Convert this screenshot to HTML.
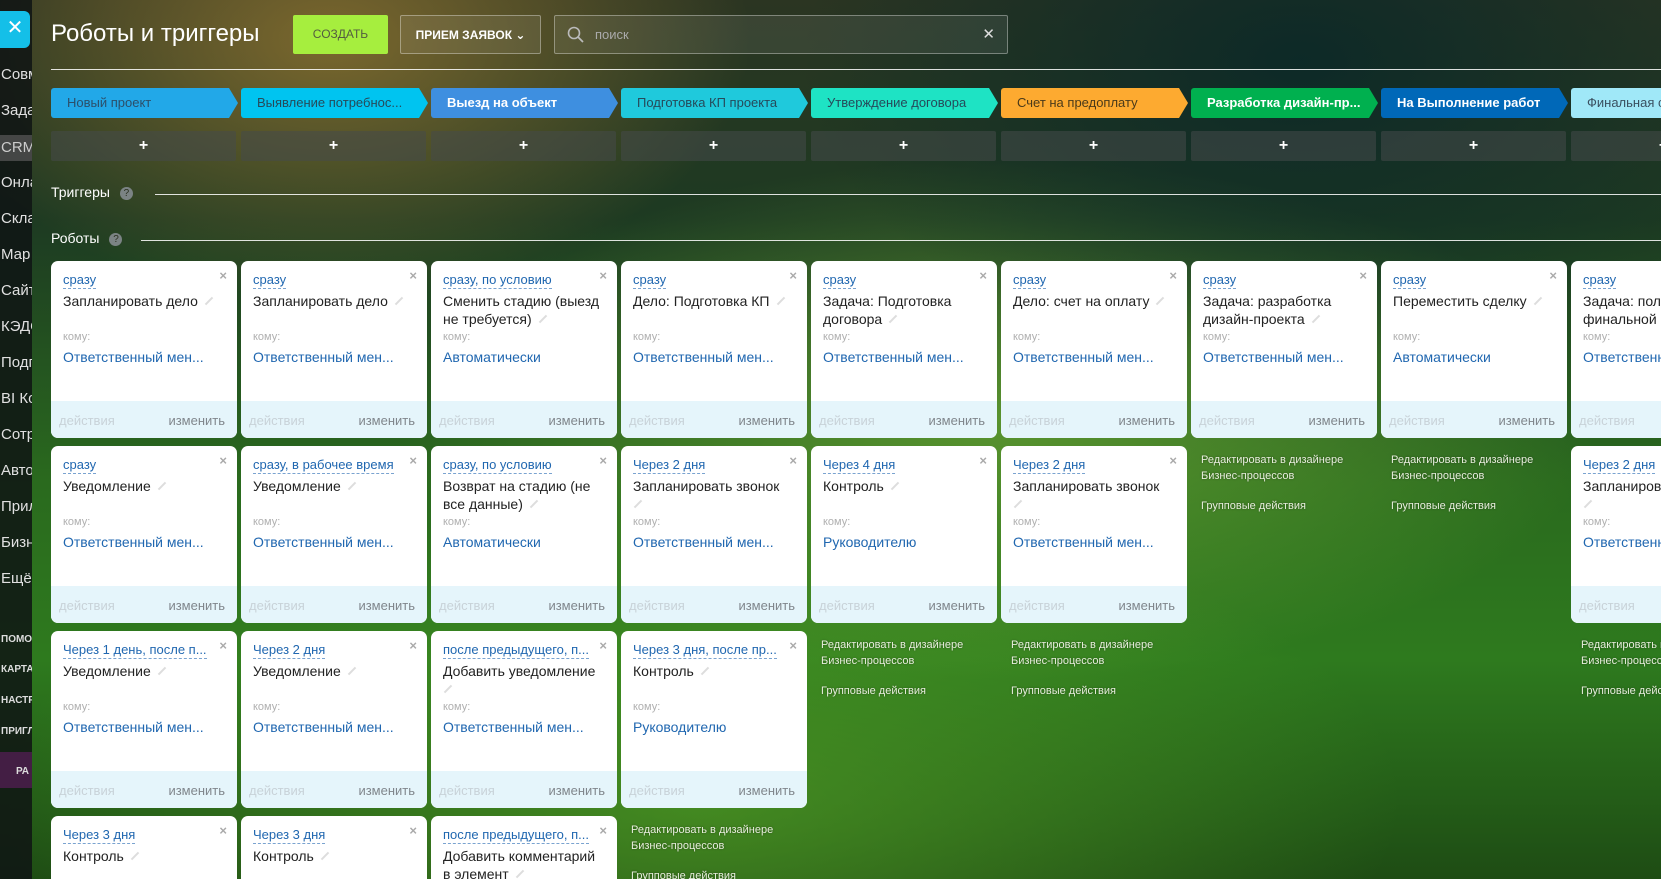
<!DOCTYPE html>
<html><head><meta charset="utf-8"><style>
*{box-sizing:border-box;margin:0;padding:0}
html,body{width:1661px;height:879px;overflow:hidden}
#w{position:relative;width:1661px;height:879px;overflow:hidden;font-family:"Liberation Sans","DejaVu Sans",sans-serif;
background:
radial-gradient(ellipse 420px 260px at 330px 40px,rgba(150,120,50,.75),rgba(150,120,50,0) 100%),
radial-gradient(ellipse 500px 300px at 1300px 60px,rgba(10,40,40,.9),rgba(10,40,40,0) 100%),
radial-gradient(ellipse 600px 260px at 1000px 420px,rgba(130,190,60,.55),rgba(130,190,60,0) 100%),
radial-gradient(ellipse 700px 300px at 700px 800px,rgba(90,170,40,.6),rgba(90,170,40,0) 100%),
linear-gradient(180deg,#2b3522 0%,#1d3a22 25%,#2a6a1e 55%,#2e7a1e 75%,#1e4c14 100%);}
.side{position:absolute;left:0;top:0;width:32px;height:879px;background:rgba(15,20,20,.85);overflow:hidden}
.side div{position:absolute;left:1px;color:#e0e0e0;font-size:15px;white-space:nowrap}
.side .sm{font-size:10px;font-weight:bold;color:#ddd}
.close{position:absolute;left:0;top:11px;width:30px;height:37px;background:#14bfe8;border-radius:0 6px 6px 0;color:#fff;font-size:20px;text-align:center;line-height:35px}
.title{position:absolute;left:51px;top:20px;color:#fff;font-size:24px}
.btn{position:absolute;top:15px;height:39px;border-radius:2px;font-size:12px;font-weight:bold;text-align:center;line-height:39px}
.hline{position:absolute;height:1px;background:rgba(255,255,255,.85);right:0}
.stage{position:absolute;top:88px;height:30px;width:187px;font-size:13px;line-height:30px;padding-left:16px;white-space:nowrap;overflow:hidden;border-radius:3px 0 0 3px;clip-path:polygon(0 0,178px 0,187px 50%,178px 100%,0 100%)}
.plus{position:absolute;top:131px;height:30px;width:185px;background:rgba(70,75,75,.55);border-radius:2px;color:#fff;text-align:center;line-height:30px;font-size:16px;font-weight:bold}
.sec{position:absolute;left:51px;color:#fff;font-size:14px}
.q{display:inline-block;width:13px;height:13px;border-radius:50%;background:#7b8384;color:#2a3020;font-size:10px;text-align:center;line-height:13px;margin-left:10px;vertical-align:1px}
.card{position:absolute;width:186px;height:177px;background:#fff;border-radius:7px;overflow:hidden}
.card .x{position:absolute;right:10px;top:7px;color:#aaa;font-size:13px;font-weight:bold}
.card .t{position:absolute;left:12px;top:11px;color:#2067b0;font-size:13px;border-bottom:1px dashed #7aa3d0;white-space:nowrap;line-height:16px;max-width:155px;overflow:hidden}
.card .n{position:absolute;left:12px;top:31px;width:160px;color:#222;font-size:14px;line-height:18px}
.card .n i{display:inline-block;width:10px;height:2px;background:#ddd;transform:rotate(-45deg);margin-left:6px;vertical-align:4px}
.card .k{position:absolute;left:12px;top:70px;color:#b0b0b0;font-size:11px}
.card .l{position:absolute;left:12px;top:88px;color:#2067b0;font-size:14px;white-space:nowrap}
.card .f{position:absolute;left:0;right:0;bottom:0;height:37px;background:#e5f5fb}
.card .f span{position:absolute;top:12px;font-size:13px}
.card .f .a{left:8px;color:#c8d2d8}
.card .f .c{right:12px;color:#80868c}
.links{position:absolute;color:#e8eedd;font-size:11px;line-height:16px;width:185px}
.links div{margin-bottom:14px;text-shadow:0 0 2px rgba(0,0,0,.4)}
</style></head><body><div id="w">
<div class="side">
<div style="top:66px">Совм</div><div style="top:102px">Зада</div>
<div style="top:135px;left:0;width:32px;height:26px;background:rgba(90,90,90,.7);color:#ccc;padding-left:1px;line-height:26px">CRM</div>
<div style="top:174px">Онла</div><div style="top:210px">Скла</div><div style="top:246px">Мар</div><div style="top:282px">Сайт</div><div style="top:318px">КЭДС</div><div style="top:354px">Подп</div><div style="top:390px">BI Ко</div><div style="top:426px">Сотр</div><div style="top:462px">Авто</div><div style="top:498px">Прил</div><div style="top:534px">Бизн</div><div style="top:570px">Ещё</div>
<div class="sm" style="top:634px">ПОМО</div><div class="sm" style="top:664px">КАРТА</div><div class="sm" style="top:695px">НАСТР</div><div class="sm" style="top:726px">ПРИГЛ</div>
<div style="top:752px;left:0;width:32px;height:36px;background:rgba(80,30,80,.8)"></div>
<div class="sm" style="top:766px;left:16px">РА</div>
</div>
<div class="close">✕</div>
<div class="title">Роботы и триггеры</div>
<div class="btn" style="left:293px;width:95px;background:#a6ee3e;color:#545c40;font-weight:normal">СОЗДАТЬ</div>
<div class="btn" style="left:400px;width:141px;border:1px solid rgba(255,255,255,.35);background:rgba(255,255,255,.08);color:#fff">ПРИЕМ ЗАЯВОК ⌄</div>
<div style="position:absolute;left:554px;top:15px;width:454px;height:39px;border:1px solid rgba(255,255,255,.35);background:rgba(255,255,255,.08);border-radius:2px">
<svg style="position:absolute;left:12px;top:10px" width="18" height="18" viewBox="0 0 18 18"><circle cx="7" cy="7" r="5.5" fill="none" stroke="#bbb" stroke-width="1.6"/><line x1="11" y1="11" x2="16" y2="16" stroke="#bbb" stroke-width="1.8"/></svg>
<span style="position:absolute;left:40px;top:11px;color:#aaa;font-size:13px">поиск</span>
<span style="position:absolute;right:12px;top:9px;color:#ddd;font-size:15px">✕</span></div>
<div class="hline" style="left:51px;top:69px"></div>

<div class="stage" style="left:51px;background:#22a8e8;color:#2c4f6a">Новый проект</div>
<div class="stage" style="left:241px;background:#00c4f0;color:#264a5a">Выявление потребнос...</div>
<div class="stage" style="left:431px;background:#3e8fe0;color:#fff;font-weight:bold">Выезд на объект</div>
<div class="stage" style="left:621px;background:#1fc9dc;color:#264a5a">Подготовка КП проекта</div>
<div class="stage" style="left:811px;background:#1ee3c4;color:#264a5a">Утверждение договора</div>
<div class="stage" style="left:1001px;background:#fdaa30;color:#4a3a1a">Счет на предоплату</div>
<div class="stage" style="left:1191px;background:#00b04f;color:#fff;font-weight:bold">Разработка дизайн-пр...</div>
<div class="stage" style="left:1381px;background:#0068b8;color:#fff;font-weight:bold">На Выполнение работ</div>
<div class="stage" style="left:1571px;background:#a0e8f8;color:#3a5060">Финальная с</div>

<div class="plus" style="left:51px">+</div><div class="plus" style="left:241px">+</div><div class="plus" style="left:431px">+</div><div class="plus" style="left:621px">+</div><div class="plus" style="left:811px">+</div><div class="plus" style="left:1001px">+</div><div class="plus" style="left:1191px">+</div><div class="plus" style="left:1381px">+</div><div class="plus" style="left:1571px">+</div>

<div class="sec" style="top:184px">Триггеры<span class="q">?</span></div>
<div class="hline" style="left:155px;top:194px"></div>
<div class="sec" style="top:230px">Роботы<span class="q">?</span></div>
<div class="hline" style="left:141px;top:240px"></div>

<div class="card" style="left:51px;top:261px"><span class="x">×</span><span class="t">сразу</span><div class="n">Запланировать дело<i></i></div><div class="k">кому:</div><div class="l">Ответственный мен...</div><div class="f"><span class="a">действия</span><span class="c">изменить</span></div></div>
<div class="card" style="left:51px;top:446px"><span class="x">×</span><span class="t">сразу</span><div class="n">Уведомление<i></i></div><div class="k">кому:</div><div class="l">Ответственный мен...</div><div class="f"><span class="a">действия</span><span class="c">изменить</span></div></div>
<div class="card" style="left:51px;top:631px"><span class="x">×</span><span class="t">Через 1 день, после п...</span><div class="n">Уведомление<i></i></div><div class="k">кому:</div><div class="l">Ответственный мен...</div><div class="f"><span class="a">действия</span><span class="c">изменить</span></div></div>
<div class="card" style="left:51px;top:816px"><span class="x">×</span><span class="t">Через 3 дня</span><div class="n">Контроль<i></i></div></div>

<div class="card" style="left:241px;top:261px"><span class="x">×</span><span class="t">сразу</span><div class="n">Запланировать дело<i></i></div><div class="k">кому:</div><div class="l">Ответственный мен...</div><div class="f"><span class="a">действия</span><span class="c">изменить</span></div></div>
<div class="card" style="left:241px;top:446px"><span class="x">×</span><span class="t">сразу, в рабочее время</span><div class="n">Уведомление<i></i></div><div class="k">кому:</div><div class="l">Ответственный мен...</div><div class="f"><span class="a">действия</span><span class="c">изменить</span></div></div>
<div class="card" style="left:241px;top:631px"><span class="x">×</span><span class="t">Через 2 дня</span><div class="n">Уведомление<i></i></div><div class="k">кому:</div><div class="l">Ответственный мен...</div><div class="f"><span class="a">действия</span><span class="c">изменить</span></div></div>
<div class="card" style="left:241px;top:816px"><span class="x">×</span><span class="t">Через 3 дня</span><div class="n">Контроль<i></i></div></div>

<div class="card" style="left:431px;top:261px"><span class="x">×</span><span class="t">сразу, по условию</span><div class="n">Сменить стадию (выезд не требуется)<i></i></div><div class="k">кому:</div><div class="l">Автоматически</div><div class="f"><span class="a">действия</span><span class="c">изменить</span></div></div>
<div class="card" style="left:431px;top:446px"><span class="x">×</span><span class="t">сразу, по условию</span><div class="n">Возврат на стадию (не все данные)<i></i></div><div class="k">кому:</div><div class="l">Автоматически</div><div class="f"><span class="a">действия</span><span class="c">изменить</span></div></div>
<div class="card" style="left:431px;top:631px"><span class="x">×</span><span class="t">после предыдущего, п...</span><div class="n">Добавить уведомление<br><i style="margin-left:0"></i></div><div class="k">кому:</div><div class="l">Ответственный мен...</div><div class="f"><span class="a">действия</span><span class="c">изменить</span></div></div>
<div class="card" style="left:431px;top:816px"><span class="x">×</span><span class="t">после предыдущего, п...</span><div class="n">Добавить комментарий в элемент<i></i></div></div>

<div class="card" style="left:621px;top:261px"><span class="x">×</span><span class="t">сразу</span><div class="n">Дело: Подготовка КП<i></i></div><div class="k">кому:</div><div class="l">Ответственный мен...</div><div class="f"><span class="a">действия</span><span class="c">изменить</span></div></div>
<div class="card" style="left:621px;top:446px"><span class="x">×</span><span class="t">Через 2 дня</span><div class="n">Запланировать звонок<br><i style="margin-left:0"></i></div><div class="k">кому:</div><div class="l">Ответственный мен...</div><div class="f"><span class="a">действия</span><span class="c">изменить</span></div></div>
<div class="card" style="left:621px;top:631px"><span class="x">×</span><span class="t">Через 3 дня, после пр...</span><div class="n">Контроль<i></i></div><div class="k">кому:</div><div class="l">Руководителю</div><div class="f"><span class="a">действия</span><span class="c">изменить</span></div></div>
<div class="links" style="left:631px;top:822px"><div>Редактировать в дизайнере<br>Бизнес-процессов</div><div>Групповые действия</div></div>

<div class="card" style="left:811px;top:261px"><span class="x">×</span><span class="t">сразу</span><div class="n">Задача: Подготовка договора<i></i></div><div class="k">кому:</div><div class="l">Ответственный мен...</div><div class="f"><span class="a">действия</span><span class="c">изменить</span></div></div>
<div class="card" style="left:811px;top:446px"><span class="x">×</span><span class="t">Через 4 дня</span><div class="n">Контроль<i></i></div><div class="k">кому:</div><div class="l">Руководителю</div><div class="f"><span class="a">действия</span><span class="c">изменить</span></div></div>
<div class="links" style="left:821px;top:637px"><div>Редактировать в дизайнере<br>Бизнес-процессов</div><div>Групповые действия</div></div>

<div class="card" style="left:1001px;top:261px"><span class="x">×</span><span class="t">сразу</span><div class="n">Дело: счет на оплату<i></i></div><div class="k">кому:</div><div class="l">Ответственный мен...</div><div class="f"><span class="a">действия</span><span class="c">изменить</span></div></div>
<div class="card" style="left:1001px;top:446px"><span class="x">×</span><span class="t">Через 2 дня</span><div class="n">Запланировать звонок<br><i style="margin-left:0"></i></div><div class="k">кому:</div><div class="l">Ответственный мен...</div><div class="f"><span class="a">действия</span><span class="c">изменить</span></div></div>
<div class="links" style="left:1011px;top:637px"><div>Редактировать в дизайнере<br>Бизнес-процессов</div><div>Групповые действия</div></div>

<div class="card" style="left:1191px;top:261px"><span class="x">×</span><span class="t">сразу</span><div class="n">Задача: разработка дизайн-проекта<i></i></div><div class="k">кому:</div><div class="l">Ответственный мен...</div><div class="f"><span class="a">действия</span><span class="c">изменить</span></div></div>
<div class="links" style="left:1201px;top:452px"><div>Редактировать в дизайнере<br>Бизнес-процессов</div><div>Групповые действия</div></div>

<div class="card" style="left:1381px;top:261px"><span class="x">×</span><span class="t">сразу</span><div class="n">Переместить сделку<i></i></div><div class="k">кому:</div><div class="l">Автоматически</div><div class="f"><span class="a">действия</span><span class="c">изменить</span></div></div>
<div class="links" style="left:1391px;top:452px"><div>Редактировать в дизайнере<br>Бизнес-процессов</div><div>Групповые действия</div></div>

<div class="card" style="left:1571px;top:261px"><span class="x">×</span><span class="t">сразу</span><div class="n">Задача: получение финальной оплаты<i></i></div><div class="k">кому:</div><div class="l">Ответственный мен...</div><div class="f"><span class="a">действия</span><span class="c">изменить</span></div></div>
<div class="card" style="left:1571px;top:446px"><span class="x">×</span><span class="t">Через 2 дня</span><div class="n">Запланировать звонок<br><i style="margin-left:0"></i></div><div class="k">кому:</div><div class="l">Ответственный мен...</div><div class="f"><span class="a">действия</span><span class="c">изменить</span></div></div>
<div class="links" style="left:1581px;top:637px"><div>Редактировать в дизайнере<br>Бизнес-процессов</div><div>Групповые действия</div></div>
</div></body></html>
